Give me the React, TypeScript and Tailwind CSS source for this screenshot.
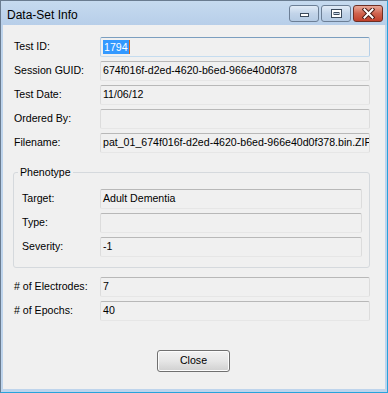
import React from "react";

const font = { fontFamily: '"Liberation Sans", Arial, sans-serif' };

function Field({ value, focused }: { value?: React.ReactNode; focused?: boolean }) {
  return (
    <div
      className={`flex-1 h-[20px] rounded-[2px] border bg-[#f0f0f0] flex items-center pl-[2px] overflow-hidden whitespace-nowrap text-[10.6px] text-black ${
        focused
          ? "border-t-[#7b9ebf] border-x-[#b5cfe7] border-b-[#c5dcef]"
          : "border-t-[#b8b8b8] border-x-[#dcdcdc] border-b-[#e6e6e6]"
      }`}
    >
      {value}
    </div>
  );
}

function Row({ label, value, labelW, focused }: { label: string; value?: React.ReactNode; labelW: string; focused?: boolean }) {
  return (
    <div className="flex items-center h-[20px]">
      <span className={`${labelW} text-[10.6px] text-black`}>{label}</span>
      <Field value={value} focused={focused} />
    </div>
  );
}

function CaptionButton({ kind }: { kind: "min" | "max" | "close" }) {
  const isClose = kind === "close";
  return (
    <div
      className={`w-[30px] h-[17px] rounded-[3px] border flex items-center justify-center ${
        isClose
          ? "border-[#6d2f25] bg-gradient-to-b from-[#e8a898] via-[#d0634e] to-[#c13f2a]"
          : "border-[#6c7f96] bg-gradient-to-b from-[#e2ecf7] via-[#c2d4e9] to-[#b4cae3]"
      }`}
    >
      {kind === "min" && (
        <svg width="11" height="9" viewBox="0 0 11 9">
          <rect x="1.5" y="4.5" width="8" height="3" fill="#fff" stroke="#3b4a5c" />
        </svg>
      )}
      {kind === "max" && (
        <svg width="11" height="9" viewBox="0 0 11 9">
          <rect x="0.5" y="0.5" width="10" height="8" fill="#fff" stroke="#3b4a5c" />
          <rect x="3" y="3.5" width="5" height="2" fill="#c7d7ea" stroke="#3b4a5c" strokeWidth="1" />
        </svg>
      )}
      {isClose && (
        <svg width="13" height="11" viewBox="0 0 13 11">
          <path d="M2.5 1.5 L10.5 9.5 M10.5 1.5 L2.5 9.5" stroke="#4a1b14" strokeWidth="4" strokeLinecap="square" />
          <path d="M2.5 1.5 L10.5 9.5 M10.5 1.5 L2.5 9.5" stroke="#ffffff" strokeWidth="2" strokeLinecap="square" />
        </svg>
      )}
    </div>
  );
}

export default function App() {
  return (
    <div style={font} className="w-[388px] h-[393px] flex flex-col bg-[#bed4ec] border border-l-[#6a7c90] border-t-[#6a7c90] border-r-[#28a3dc] border-b-[#28a3dc] overflow-hidden">
      {/* title bar */}
      <div className="h-[24px] flex items-start pl-[6px] pr-[4px] bg-gradient-to-b from-[#c6daef] to-[#b7cee9]">
        <span className="mt-[5px] text-[12px] text-black">Data-Set Info</span>
        <div className="ml-auto mt-[4px] flex gap-[2px]">
          <CaptionButton kind="min" />
          <CaptionButton kind="max" />
          <CaptionButton kind="close" />
        </div>
      </div>

      {/* client */}
      <div className="mx-[2px] mb-[3px] flex-1 bg-[#f0f0f0] flex flex-col pl-[10px] pr-[15px] pt-[12px]">
        <div className="flex flex-col gap-[4px] pl-[1px]">
          <Row
            label="Test ID:"
            labelW="w-[86px]"
            focused
            value={
              <span className="flex items-center">
                <span className="bg-[#3399ff] text-white h-[14px] leading-[14px] px-[1px]">1794</span>
                <span className="w-[1px] h-[14px] bg-[#d9641c]" />
              </span>
            }
          />
          <Row label="Session GUID:" labelW="w-[86px]" value="674f016f-d2ed-4620-b6ed-966e40d0f378" />
          <Row label="Test Date:" labelW="w-[86px]" value="11/06/12" />
          <Row label="Ordered By:" labelW="w-[86px]" />
          <Row label="Filename:" labelW="w-[86px]" value="pat_01_674f016f-d2ed-4620-b6ed-966e40d0f378.bin.ZIP" />
        </div>

        {/* Phenotype group */}
        <div className="relative mt-[19px] border border-[#d5d9dd] rounded-[3px] pl-[8px] pr-[7px] pt-[16px] pb-[10px]">
          <span className="absolute -top-[8px] left-[4px] px-[2px] bg-[#f0f0f0] text-[10.6px] text-black leading-[14px]">Phenotype</span>
          <div className="flex flex-col gap-[4px]">
            <Row label="Target:" labelW="w-[78px]" value="Adult Dementia" />
            <Row label="Type:" labelW="w-[78px]" />
            <Row label="Severity:" labelW="w-[78px]" value="-1" />
          </div>
        </div>

        <div className="mt-[9px] flex flex-col gap-[4px] pl-[1px]">
          <Row label="# of Electrodes:" labelW="w-[86px]" value="7" />
          <Row label="# of Epochs:" labelW="w-[86px]" value="40" />
        </div>

        <button className="mt-[29px] ml-[144px] w-[73px] h-[22px] rounded-[3px] border border-[#707070] bg-gradient-to-b from-[#f2f2f2] via-[#e6e6e6] to-[#d0d0d0] text-[10.6px] text-black shadow-[inset_0_0_0_1px_#fcfcfc]">
          Close
        </button>
      </div>
    </div>
  );
}
